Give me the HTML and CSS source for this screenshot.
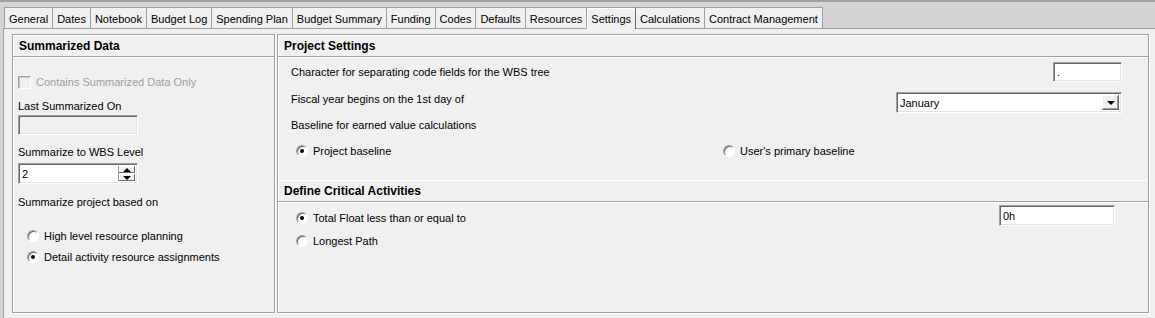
FILE: index.html
```html
<!DOCTYPE html>
<html lang="en">
<head>
    <meta charset="UTF-8">
    <meta name="viewport" content="width=device-width, initial-scale=1.0">
    <title>Project Settings</title>
    <link rel="stylesheet" href="styles.css">
</head>
<body>
    <div class="topline"></div>
    <div class="tabs">
        <div class="tab">General</div>
        <div class="tab">Dates</div>
        <div class="tab">Notebook</div>
        <div class="tab">Budget Log</div>
        <div class="tab">Spending Plan</div>
        <div class="tab">Budget Summary</div>
        <div class="tab">Funding</div>
        <div class="tab">Codes</div>
        <div class="tab">Defaults</div>
        <div class="tab">Resources</div>
        <div class="tab active">Settings</div>
        <div class="tab">Calculations</div>
        <div class="tab">Contract Management</div>
    </div>

    <div class="page">
        <!-- Left: summarized data -->
        <section class="panel summary">
            <div class="panel-head">Summarized Data</div>
            <div class="panel-body">
                <div class="check disabled contains"><span class="box"></span>Contains Summarized Data Only</div>
                <div class="label last-label">Last Summarized On</div>
                <div class="field last-field"></div>
                <div class="label wbs-label">Summarize to WBS Level</div>
                <div class="field spin">
                    <span class="val">2</span>
                    <span class="spin-btns">
                        <span class="spin-btn"><span class="arrow-up"></span></span>
                        <span class="spin-btn"><span class="arrow-down"></span></span>
                    </span>
                </div>
                <div class="label based-label">Summarize project based on</div>
                <div class="option high"><span class="radio"></span>High level resource planning</div>
                <div class="option detail"><span class="radio on"></span>Detail activity resource assignments</div>
            </div>
        </section>

        <!-- Right: project settings -->
        <section class="panel settings">
            <div class="panel-head">Project Settings</div>
            <div class="settings-body">
                <div class="row sep-row">
                    <span>Character for separating code fields for the WBS tree</span>
                    <div class="field sep-field"><span class="val">.</span></div>
                </div>
                <div class="row fiscal-row">
                    <span class="fiscal-label">Fiscal year begins on the 1st day of</span>
                    <div class="field select">
                        <span class="val">January</span>
                        <span class="drop-btn"><span class="arrow-down"></span></span>
                    </div>
                </div>
                <div class="label baseline-label">Baseline for earned value calculations</div>
                <div class="baseline-opts">
                    <div class="option"><span class="radio on"></span>Project baseline</div>
                    <div class="option"><span class="radio"></span>User's primary baseline</div>
                </div>
            </div>

            <div class="panel-head sub-head">Define Critical Activities</div>
            <div class="settings-body">
                <div class="row float-row">
                    <div class="option float-opt"><span class="radio on"></span>Total Float less than or equal to</div>
                    <div class="field float-field"><span class="val">0h</span></div>
                </div>
                <div class="option longest"><span class="radio"></span>Longest Path</div>
            </div>
        </section>
    </div>
</body>
</html>
```

FILE: styles.css
```css
html, body {
    margin: 0;
    height: 100%;
}

body {
    font-family: 'Liberation Sans', Arial, sans-serif;
    font-size: 11px;
    color: #000;
    background-color: #d4d4d4;
    display: flex;
    flex-direction: column;
    overflow: hidden;
}

.topline {
    height: 2px;
    background: #a0a0a0;
}

/* Tab strip */
.tabs {
    display: flex;
    padding: 5px 0 0 4px;
}

.tab {
    height: 20px;
    line-height: 22px;
    padding: 0 4px;
    border: 1px solid #a0a0a0;
    border-bottom: none;
    margin-right: -1px;
    background: #f0f0f0;
    white-space: nowrap;
}

.tab.active {
    position: relative;
    z-index: 1;
    height: 21px;
    margin-bottom: -1px;
    border-right-color: #696969;
    box-shadow: inset 1px 1px 0 #fff;
}

/* Main area */
.page {
    flex: 1;
    display: flex;
    gap: 2px;
    margin-left: 3px;
    padding: 5px 6px 5px 8px;
    border-top: 1px solid #a0a0a0;
    border-left: 1px solid #a0a0a0;
    background: #f0f0f0;
}

.panel {
    border: 1px solid #a0a0a0;
    box-shadow: 1px 1px 0 #fff, inset 1px 1px 0 #fff;
    display: flex;
    flex-direction: column;
}

.summary {
    width: 263px;
    box-sizing: border-box;
}

.settings {
    flex: 1;
}

.panel-head {
    height: 21px;
    line-height: 22px;
    padding-left: 6px;
    font-size: 12px;
    font-weight: bold;
    border-bottom: 1px solid #a0a0a0;
    box-shadow: 0 1px 0 #fff;
}

.sub-head {
    margin-top: 22px;
    box-shadow: inset 0 1px 0 #fff, 0 1px 0 #fff;
}

.panel-body {
    padding-left: 5px;
    display: flex;
    flex-direction: column;
    align-items: flex-start;
}

.label {
    height: 14px;
    line-height: 14px;
}

/* Sunken edit fields */
.field {
    box-sizing: border-box;
    height: 20px;
    background: #fff;
    border: 1px solid;
    border-color: #a0a0a0 #fff #fff #a0a0a0;
    box-shadow: inset 1px 1px 0 #696969, inset -1px -1px 0 #e3e3e3;
    display: flex;
    align-items: center;
    padding-left: 3px;
}

.val {
    line-height: 14px;
}

.last-field {
    width: 120px;
    margin-top: 2px;
    background: #f0f0f0;
}

.contains {
    margin-top: 18px;
}

.last-label {
    margin-top: 10px;
}

.wbs-label {
    margin-top: 10px;
}

.based-label {
    margin-top: 11px;
}

.spin {
    width: 120px;
    height: 21px;
    margin-top: 4px;
    position: relative;
}

.spin-btns {
    position: absolute;
    right: 2px;
    top: 2px;
    bottom: 2px;
    width: 16px;
    border-left: 1px solid #a0a0a0;
    display: flex;
    flex-direction: column;
    gap: 1px;
}

.spin-btn {
    flex: 1;
    display: flex;
    align-items: center;
    justify-content: center;
    background: #f0f0f0;
    box-shadow: inset -1px -1px 0 #696969, inset 1px 1px 0 #fff;
}

.arrow-up {
    width: 0;
    height: 0;
    border-left: 4px solid transparent;
    border-right: 4px solid transparent;
    border-bottom: 4px solid #000;
}

.arrow-down {
    width: 0;
    height: 0;
    border-left: 4px solid transparent;
    border-right: 4px solid transparent;
    border-top: 4px solid #000;
}

/* Checkbox and radios */
.check,
.option {
    display: flex;
    align-items: center;
    height: 14px;
    white-space: nowrap;
}

.check .box {
    box-sizing: border-box;
    width: 13px;
    height: 13px;
    margin-right: 5px;
    border: 1px solid;
    border-color: #a0a0a0 #fff #fff #a0a0a0;
    box-shadow: inset 1px 1px 0 #c8c8c8;
    background: #f0f0f0;
}

.check.disabled {
    color: #a0a0a0;
}

.radio {
    box-sizing: border-box;
    width: 12px;
    height: 12px;
    margin-right: 5px;
    border-radius: 50%;
    border: 1px solid;
    border-color: #a0a0a0 #fff #fff #a0a0a0;
    box-shadow: inset 1px 1px 0 #696969;
    background: #fff;
    position: relative;
}

.radio.on::after {
    content: '';
    position: absolute;
    left: 3px;
    top: 3px;
    width: 4px;
    height: 4px;
    border-radius: 50%;
    background: #000;
}

.panel-body .option {
    margin-left: 9px;
}

.high {
    margin-top: 20px;
}

.detail {
    margin-top: 7px;
}

/* Project settings */
.settings-body {
    padding: 0 26px 0 13px;
    display: flex;
    flex-direction: column;
}

.row {
    display: flex;
    justify-content: space-between;
}

.sep-row {
    margin-top: 5px;
    align-items: center;
}

.sep-field {
    width: 69px;
}

.fiscal-row {
    margin-top: 10px;
    align-items: flex-start;
}

.fiscal-label {
    line-height: 14px;
}

.select {
    width: 226px;
    height: 21px;
    position: relative;
}

.drop-btn {
    position: absolute;
    right: 2px;
    top: 2px;
    bottom: 2px;
    width: 17px;
    display: flex;
    align-items: center;
    justify-content: center;
    background: #f0f0f0;
    box-shadow: inset -1px -1px 0 #696969, inset 1px 1px 0 #fff, inset -2px -2px 0 #a0a0a0;
}

.baseline-label {
    margin-top: 5px;
}

.baseline-opts {
    margin-top: 12px;
    padding-left: 5px;
    display: grid;
    grid-template-columns: 427px 1fr;
}

.float-row {
    margin-top: 3px;
    align-items: flex-start;
    padding-right: 7px;
}

.float-opt {
    margin: 6px 0 0 5px;
}

.float-field {
    width: 116px;
    height: 21px;
}

.longest {
    margin: 8px 0 0 5px;
}
```
